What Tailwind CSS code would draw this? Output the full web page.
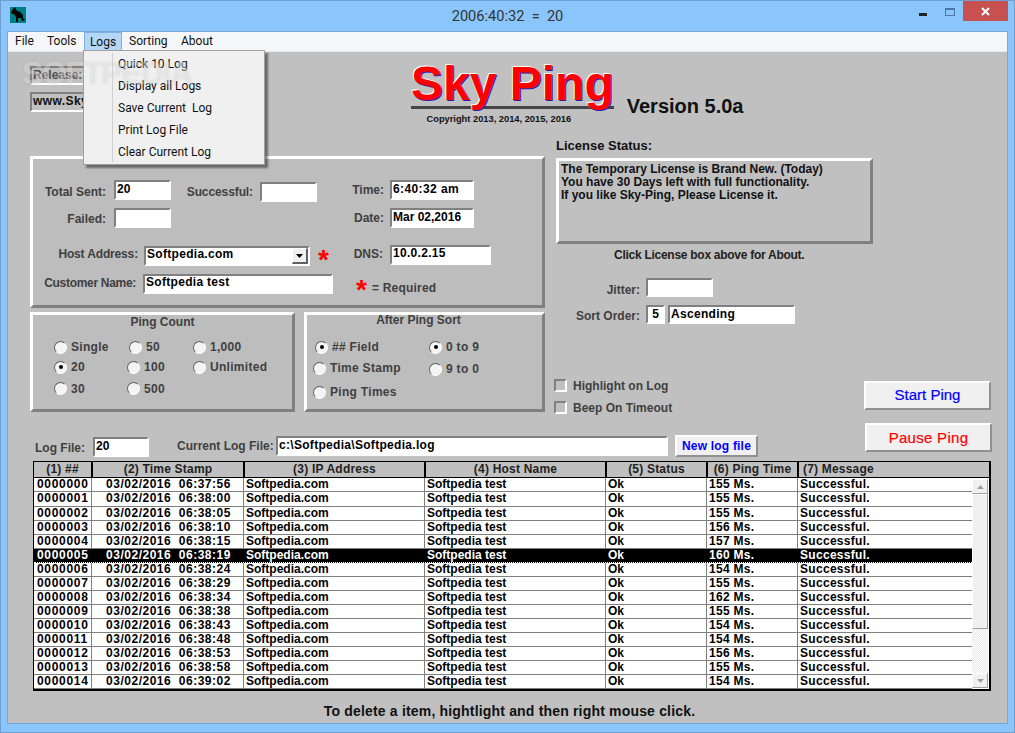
<!DOCTYPE html>
<html lang="en">
<head>
    <meta charset="UTF-8">
    <title>Sky Ping</title>
    <script src="https://cdn.jsdelivr.net/npm/@tailwindcss/browser@4"></script>
</head>
<body class="m-0 overflow-hidden bg-[#8ac5fb]">
<div class="relative w-[1015px] h-[733px] flex flex-col bg-[#8ac5fb] border border-[#6f9fce] font-['Liberation_Sans',Arial,sans-serif] text-[12px] leading-4 font-bold text-[#404040]">

    <!-- title bar -->
    <div class="h-[30px] shrink-0 flex items-start relative">
        <svg class="ml-[9px] mt-[6px] w-4 h-4" viewBox="0 0 16 16">
            <rect width="16" height="16" fill="#008080"/>
            <path d="M1 5 L3 2 L5 0 L6 3 L10 5 L13 8 L13 11 L15 13 L12 14 L11 11 L8 11 L8 15 L6 15 L6 10 L4 7 L2 7 Z" fill="#000"/>
        </svg>
        <div class="absolute left-0 right-0 top-[5px] text-center font-['Roboto',sans-serif] font-normal text-[14.6px] leading-5 text-[#333] whitespace-pre">2006:40:32  =  20</div>
        <div class="ml-auto flex items-start">
            <div class="w-2 h-[3px] mt-[12px] bg-[#222]"></div>
            <div class="w-[10px] h-2 mt-[7px] ml-[18px] border border-t-2 border-[#4a76a8]"></div>
            <div class="w-[45px] h-[20px] ml-2 mr-[6px] bg-[#c75050] flex items-center justify-center">
                <svg class="w-[9px] h-[9px]" viewBox="0 0 9 9"><path d="M1 1 L8 8 M8 1 L1 8" stroke="#fff" stroke-width="2"/></svg>
            </div>
        </div>
    </div>

    <!-- client area -->
    <div class="flex-1 mx-[6px] mb-2 border border-[#7aa7d4] bg-[#c0c0c0] flex flex-col relative">

        <!-- menu -->
        <div class="h-[20px] shrink-0 flex bg-[#f5f6f7] border-b border-[#e8e8e8] font-['Roboto',sans-serif] font-normal text-[12px] text-[#111] pl-[1px]">
            <div class="px-[6px] leading-[19px] w-[38px]">File</div>
            <div class="leading-[19px] w-[37px]">Tools</div>
            <div class="w-[38px] text-center leading-[18px] bg-[#b5d7f7] border border-[#7fb0e0]">Logs</div>
            <div class="pl-[7px] w-[52px] leading-[19px]">Sorting</div>
            <div class="pl-[7px] leading-[19px]">About</div>
        </div>

        <!-- upper part of the form -->
        <div class="h-[371px] shrink-0 flex">

            <!-- left column -->
            <div class="w-[546px] shrink-0 pl-[22px]">
                <div class="h-[104px] flex">
                    <div class="w-[134px] pt-[14px]">
                        <div class="h-[19px] w-[110px] border-2 border-t-[#808080] border-l-[#808080] border-r-white border-b-white pl-[1px] leading-[15px] text-[#505050]">Release:</div>
                        <div class="h-[20px] w-[110px] mt-[7px] border-2 border-t-[#808080] border-l-[#808080] border-r-white border-b-white pl-[1px] leading-[14px] text-[#111] tracking-[0.4px] whitespace-nowrap overflow-hidden">www.Sky-Ping.com</div>
                    </div>
                    <div class="ml-[271px] w-[206px] pt-[7px] text-center">
                        <div class="relative z-[1] text-[48px] leading-[50px] text-[#ff0000] whitespace-nowrap [text-shadow:-1px_-1px_0_#fff,1px_1px_0_#2020b0]">Sky Ping</div>
                        <div class="h-[3px] -mt-[3px] bg-[#444]"></div>
                        <div class="text-[9.3px] leading-3 mt-[4px] pr-[27px] text-[#111] whitespace-nowrap">Copyright 2013, 2014, 2015, 2016</div>
                    </div>
                    <div class="ml-[13px] pt-[42px] text-[20px] leading-6 text-[#111] whitespace-nowrap">Version 5.0a</div>
                </div>

                <!-- main panel -->
                <div class="h-[152px] w-[515px] border-[3px] border-t-white border-l-white border-r-[#808080] border-b-[#808080] bg-[#bdbdbd]">
                    <div class="flex mt-[21px]">
                        <div class="w-[73px] pt-1 text-right">Total Sent:</div>
                        <div class="ml-2 w-[57px] h-[20px] border-2 border-t-[#808080] border-l-[#808080] border-r-white border-b-white bg-white pl-[1px] leading-[15px] text-black">20</div>
                        <div class="w-[82px] pt-1 text-right tracking-[-0.1px]">Successful:</div>
                        <div class="ml-[7px] mt-[2px] w-[57px] h-[20px] border-2 border-t-[#808080] border-l-[#808080] border-r-white border-b-white bg-white"></div>
                        <div class="w-[67px] pt-[2px] text-right">Time:</div>
                        <div class="ml-[6px] w-[84px] h-[20px] border-2 border-t-[#808080] border-l-[#808080] border-r-white border-b-white bg-white pl-[1px] leading-[15px] text-black tracking-[0.4px]">6:40:32 am</div>
                    </div>
                    <div class="flex mt-[6px]">
                        <div class="w-[73px] pt-[3px] text-right">Failed:</div>
                        <div class="ml-2 w-[57px] h-[20px] border-2 border-t-[#808080] border-l-[#808080] border-r-white border-b-white bg-white"></div>
                        <div class="w-[213px] pt-[2px] text-right">Date:</div>
                        <div class="ml-[6px] w-[84px] h-[20px] border-2 border-t-[#808080] border-l-[#808080] border-r-white border-b-white bg-white pl-[1px] leading-[15px] text-black">Mar 02,2016</div>
                    </div>
                    <div class="flex mt-[18px]">
                        <div class="w-[105px] text-right tracking-[-0.15px]">Host Address:</div>
                        <div class="ml-[6px] w-[166px] h-[20px] border-2 border-t-[#808080] border-l-[#808080] border-r-white border-b-white bg-white pl-[1px] leading-[12px] text-black flex justify-between">
                            <span class="tracking-[0.3px]">Softpedia.com</span>
                            <span class="w-4 h-4 bg-[#f0f0f0] border border-b-2 border-r-2 border-t-white border-l-white border-r-[#606060] border-b-[#606060] flex items-center justify-center">
                                <svg class="w-[7px] h-1" viewBox="0 0 7 4"><path d="M0 0 H7 L3.5 4 Z" fill="#000"/></svg>
                            </span>
                        </div>
                        <div class="w-[20px] h-[20px] pl-2 text-[#ff0000] text-[28px] leading-[28px]">*</div>
                        <div class="w-[53px] text-right">DNS:</div>
                        <div class="ml-[7px] -mt-[1px] w-[101px] h-[20px] border-2 border-t-[#808080] border-l-[#808080] border-r-white border-b-white bg-white pl-[1px] leading-[13px] text-black tracking-[0.3px]">10.0.2.15</div>
                    </div>
                    <div class="flex mt-[8px]">
                        <div class="w-[103px] pt-[1px] text-right tracking-[-0.3px]">Customer Name:</div>
                        <div class="ml-[7px] w-[190px] h-[20px] border-2 border-t-[#808080] border-l-[#808080] border-r-white border-b-white bg-white pl-[1px] leading-[12px] text-black tracking-[0.3px]">Softpedia test</div>
                        <div class="ml-[23px] w-[16px] h-[20px] text-[#ff0000] text-[28px] leading-[32px]">*</div>
                        <div class="pt-[6px] tracking-[0.2px] whitespace-nowrap">= Required</div>
                    </div>
                </div>

                <!-- radio panels -->
                <div class="flex mt-1">
                    <div class="w-[265px] h-[100px] border-[3px] border-t-white border-l-white border-r-[#808080] border-b-[#808080] bg-[#bdbdbd]">
                        <div class="text-center leading-4 -mt-[1px]">Ping Count</div>
                        <div class="grid grid-cols-[73px_66px_1fr] auto-rows-[20px] pl-[21px] mt-[7px] tracking-[0.3px]">
                            <div class="flex items-center gap-1"><span class="w-[13px] h-[13px] rounded-full bg-[#f4f4f4] border border-t-[#606060] border-l-[#606060] border-r-white border-b-white"></span>Single</div>
                            <div class="flex items-center gap-1 pl-[2px]"><span class="w-[13px] h-[13px] rounded-full bg-[#f4f4f4] border border-t-[#606060] border-l-[#606060] border-r-white border-b-white"></span>50</div>
                            <div class="flex items-center gap-1"><span class="w-[13px] h-[13px] rounded-full bg-[#f4f4f4] border border-t-[#606060] border-l-[#606060] border-r-white border-b-white"></span>1,000</div>
                            <div class="flex items-center gap-1"><span class="w-[13px] h-[13px] rounded-full bg-[#f4f4f4] border border-t-[#606060] border-l-[#606060] border-r-white border-b-white flex items-center justify-center"><span class="w-1 h-1 rounded-full bg-black"></span></span>20</div>
                            <div class="flex items-center gap-1"><span class="w-[13px] h-[13px] rounded-full bg-[#f4f4f4] border border-t-[#606060] border-l-[#606060] border-r-white border-b-white"></span>100</div>
                            <div class="flex items-center gap-1"><span class="w-[13px] h-[13px] rounded-full bg-[#f4f4f4] border border-t-[#606060] border-l-[#606060] border-r-white border-b-white"></span>Unlimited</div>
                            <div class="flex items-center gap-1 mt-[3px]"><span class="w-[13px] h-[13px] rounded-full bg-[#f4f4f4] border border-t-[#606060] border-l-[#606060] border-r-white border-b-white"></span>30</div>
                            <div class="flex items-center gap-1 mt-[3px]"><span class="w-[13px] h-[13px] rounded-full bg-[#f4f4f4] border border-t-[#606060] border-l-[#606060] border-r-white border-b-white"></span>500</div>
                        </div>
                    </div>
                    <div class="w-[241px] h-[100px] ml-[9px] border-[3px] border-t-white border-l-white border-r-[#808080] border-b-[#808080] bg-[#bdbdbd]">
                        <div class="text-center -mt-[3px] pr-[12px]">After Ping Sort</div>
                        <div class="flex mt-[9px] tracking-[0.3px]">
                            <div class="w-[122px] pl-[6px]">
                                <div class="flex items-center gap-1 h-[20px] pl-[2px]"><span class="w-[13px] h-[13px] rounded-full bg-[#f4f4f4] border border-t-[#606060] border-l-[#606060] border-r-white border-b-white flex items-center justify-center"><span class="w-1 h-1 rounded-full bg-black"></span></span>## Field</div>
                                <div class="flex items-center gap-1 h-[20px] mt-[1px]"><span class="w-[13px] h-[13px] rounded-full bg-[#f4f4f4] border border-t-[#606060] border-l-[#606060] border-r-white border-b-white"></span>Time Stamp</div>
                                <div class="flex items-center gap-1 h-[20px] mt-[4px]"><span class="w-[13px] h-[13px] rounded-full bg-[#f4f4f4] border border-t-[#606060] border-l-[#606060] border-r-white border-b-white"></span>Ping Times</div>
                            </div>
                            <div>
                                <div class="flex items-center gap-1 h-[20px]"><span class="w-[13px] h-[13px] rounded-full bg-[#f4f4f4] border border-t-[#606060] border-l-[#606060] border-r-white border-b-white flex items-center justify-center"><span class="w-1 h-1 rounded-full bg-black"></span></span>0 to 9</div>
                                <div class="flex items-center gap-1 h-[20px] mt-[2px]"><span class="w-[13px] h-[13px] rounded-full bg-[#f4f4f4] border border-t-[#606060] border-l-[#606060] border-r-white border-b-white"></span>9 to 0</div>
                            </div>
                        </div>
                    </div>
                </div>
            </div>

            <!-- right column -->
            <div class="flex-1">
                <div class="mt-[86px] ml-[2px] text-[13px] text-[#111]">License Status:</div>
                <div class="w-[317px] h-[86px] mt-1 ml-[2px] border-[3px] border-t-white border-l-white border-r-[#808080] border-b-[#808080] pl-[2px] pt-[2px] leading-[13px] text-[#111]">
                    The Temporary License is Brand New. (Today)<br>You have 30 Days left with full functionality.<br>If you like Sky-Ping, Please License it.
                </div>
                <div class="mt-1 ml-[60px] leading-[14px] text-[#222] tracking-[-0.27px] whitespace-nowrap">Click License box above for About.</div>
                <div class="flex mt-4">
                    <div class="w-[86px] pt-1 text-right">Jitter:</div>
                    <div class="ml-[6px] w-[67px] h-[19px] border-2 border-t-[#808080] border-l-[#808080] border-r-white border-b-white bg-white"></div>
                </div>
                <div class="flex mt-[7px]">
                    <div class="w-[86px] pt-[3px] text-right">Sort Order:</div>
                    <div class="ml-[6px] w-[19px] h-[19px] border-2 border-t-[#808080] border-l-[#808080] border-r-white border-b-white bg-white text-center leading-[14px] text-black">5</div>
                    <div class="ml-[3px] w-[127px] h-[19px] border-2 border-t-[#808080] border-l-[#808080] border-r-white border-b-white bg-white pl-[1px] leading-[14px] text-black tracking-[0.3px]">Ascending</div>
                </div>
                <div class="flex mt-[55px]">
                    <div class="w-[310px]">
                        <div class="flex items-center gap-[6px] h-[13px]"><span class="w-[13px] h-[13px] border-2 border-t-[#808080] border-l-[#808080] border-r-white border-b-white"></span><span>Highlight on Log</span></div>
                        <div class="flex items-center gap-[6px] h-[13px] mt-[9px]"><span class="w-[13px] h-[13px] border-2 border-t-[#808080] border-l-[#808080] border-r-white border-b-white"></span><span>Beep On Timeout</span></div>
                    </div>
                    <div class="w-[127px] h-[29px] mt-[2px] flex items-center justify-center pb-[2px] bg-[#f0f0f0] border-2 border-t-white border-l-white border-r-[#909090] border-b-[#909090] text-[#0000ff] font-normal text-[15px] [-webkit-text-stroke:0.2px_#0000ff]">Start Ping</div>
                </div>
            </div>
        </div>

        <!-- log file row -->
        <div class="h-[38px] shrink-0 flex items-start">
            <div class="ml-[27px] mt-[17px] w-[51px] whitespace-nowrap">Log File:</div>
            <div class="ml-[7px] mt-[14px] w-[56px] h-[20px] border-2 border-t-[#808080] border-l-[#808080] border-r-white border-b-white bg-white pl-[1px] leading-[15px] text-black">20</div>
            <div class="ml-[28px] mt-[15px] w-[94px] whitespace-nowrap">Current Log File:</div>
            <div class="ml-[5px] mt-[13px] w-[392px] h-[20px] border-2 border-t-[#808080] border-l-[#808080] border-r-white border-b-white bg-white pl-[1px] leading-[15px] text-black tracking-[0.3px]">c:\Softpedia\Softpedia.log</div>
            <div class="ml-[7px] mt-[12px] w-[83px] h-[22px] flex items-center justify-center bg-[#f0f0f0] border-2 border-t-white border-l-white border-r-[#909090] border-b-[#909090] text-[#0000ff] tracking-[0.2px]">New log file</div>
            <div class="ml-[107px] w-[127px] h-[29px] flex items-center justify-center bg-[#f0f0f0] border-2 border-t-white border-l-white border-r-[#909090] border-b-[#909090] text-[#ff0000] font-normal text-[15px] [-webkit-text-stroke:0.2px_#ff0000] tracking-[0.3px]">Pause Ping</div>
        </div>

        <!-- log table -->
        <div class="ml-[25px] w-[958px] h-[230px] shrink-0 border border-black border-r-2 border-b-2 flex flex-col text-black">
            <div class="h-[16px] shrink-0 grid grid-cols-[57px_152px_181px_181px_101px_91px_1fr] border-b border-black text-center text-[#222] leading-[14px] tracking-[0.2px] bg-[#c0c0c0]">
                <div>(1) ##</div>
                <div class="border-l-2 border-black">(2) Time Stamp</div>
                <div class="border-l-2 border-black">(3) IP Address</div>
                <div class="border-l-2 border-black">(4) Host Name</div>
                <div class="border-l-2 border-black">(5) Status</div>
                <div class="border-l-2 border-black">(6) Ping Time</div>
                <div class="border-l-2 border-black text-left pl-1">(7) Message</div>
            </div>
            <div class="flex-1 flex bg-white min-h-0">
                <div id="rows" class="w-[938px] shrink-0 pt-[0.38px]"></div>
                <div class="flex-1 flex flex-col pb-[1px] pr-[1px]">
                    <div class="h-[15px] mt-[1px] bg-[#f0f0f0] border border-t-white border-l-white border-r-[#a0a0a0] border-b-[#a0a0a0] flex items-center justify-center">
                        <svg class="w-[7px] h-1" viewBox="0 0 7 4"><path d="M3.5 0 L7 4 H0 Z" fill="#a0a0a0"/></svg>
                    </div>
                    <div class="h-[135px] bg-[#f0f0f0] border border-t-white border-l-white border-r-[#a0a0a0] border-b-[#a0a0a0]"></div>
                    <div class="flex-1 bg-[repeating-conic-gradient(#fff_0_25%,#e8e8e8_0_50%)] bg-[length:2px_2px]"></div>
                    <div class="h-[15px] bg-[#f0f0f0] border border-t-white border-l-white border-r-[#a0a0a0] border-b-[#a0a0a0] flex items-center justify-center">
                        <svg class="w-[7px] h-1" viewBox="0 0 7 4"><path d="M0 0 H7 L3.5 4 Z" fill="#a0a0a0"/></svg>
                    </div>
                </div>
            </div>
        </div>

        <div class="mt-[11px] text-center pl-[4px] font-bold text-[14px] leading-[18px] text-[#111] tracking-[0.18px]">To delete a item, hightlight and then right mouse click.</div>

        <!-- Logs dropdown -->
        <div class="absolute left-[75px] top-[18px] w-[182px] h-[115px] bg-[#f0f0f0] border border-[#a0a0a0] shadow-[3px_3px_2px_rgba(0,0,0,0.45)] font-['Roboto',sans-serif] font-normal text-[12px] text-[#111] pl-[34px] pt-[2px] z-10">
            <div class="absolute left-[28px] top-[2px] bottom-[2px] w-px bg-[#d0d0d0]"></div>
            <div class="h-[22px] leading-[22px]">Quick 10 Log</div>
            <div class="h-[22px] leading-[22px]">Display all Logs</div>
            <div class="h-[22px] leading-[22px] whitespace-pre">Save Current  Log</div>
            <div class="h-[22px] leading-[22px]">Print Log File</div>
            <div class="h-[22px] leading-[22px]">Clear Current Log</div>
        </div>

        <!-- watermark -->
        <div class="absolute left-[14px] top-[23px] z-20 pointer-events-none text-[32px] leading-9 text-white/40 font-bold tracking-[-1.5px] whitespace-nowrap [text-shadow:0_0_2px_rgba(0,0,0,0.12)]">SOFTPEDIA</div>
    </div>
</div>
<script>
    const logs = [
        ['0000000', '06:37:56', 155], ['0000001', '06:38:00', 155], ['0000002', '06:38:05', 155],
        ['0000003', '06:38:10', 156], ['0000004', '06:38:15', 157], ['0000005', '06:38:19', 160],
        ['0000006', '06:38:24', 154], ['0000007', '06:38:29', 155], ['0000008', '06:38:34', 162],
        ['0000009', '06:38:38', 155], ['0000010', '06:38:43', 154], ['0000011', '06:38:48', 154],
        ['0000012', '06:38:53', 156], ['0000013', '06:38:58', 155], ['0000014', '06:39:02', 154]
    ];
    const rows = document.getElementById('rows');
    logs.forEach((r, i) => {
        const sel = i === 5;
        const row = document.createElement('div');
        row.className = sel
            ? 'h-[14.07px] grid grid-cols-[57px_152px_181px_181px_101px_91px_1fr] bg-black text-white border-b border-dotted border-white leading-[13px] whitespace-pre'
            : 'h-[14.07px] grid grid-cols-[57px_152px_181px_181px_101px_91px_1fr] border-b border-[#808080] leading-[13px] whitespace-pre';
        const line = sel ? 'border-l border-black' : 'border-l border-[#808080]';
        row.innerHTML = `
            <div class="pl-[3px] tracking-[0.7px]">${r[0]}</div>
            <div class="${line} text-center pl-[2px] tracking-[0.5px]">03/02/2016  ${r[1]}</div>
            <div class="${line} pl-[2px]">Softpedia.com</div>
            <div class="${line} pl-[2px]">Softpedia test</div>
            <div class="${line} pl-[2px]">Ok</div>
            <div class="${line} pl-[2px] tracking-[0.3px]">${r[2]} Ms.</div>
            <div class="${line} pl-[2px] tracking-[0.3px]">Successful.</div>`;
        rows.appendChild(row);
    });
</script>
</body>
</html>
